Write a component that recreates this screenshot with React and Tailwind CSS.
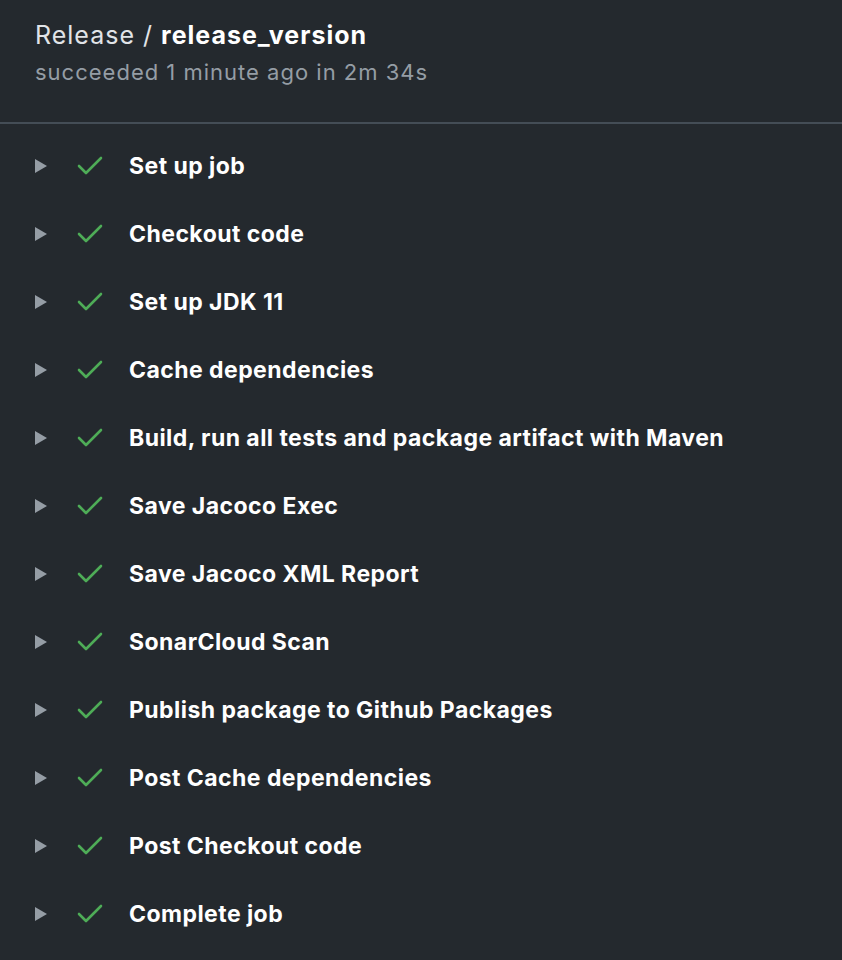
const steps = [
  'Set up job',
  'Checkout code',
  'Set up JDK 11',
  'Cache dependencies',
  'Build, run all tests and package artifact with Maven',
  'Save Jacoco Exec',
  'Save Jacoco XML Report',
  'SonarCloud Scan',
  'Publish package to Github Packages',
  'Post Cache dependencies',
  'Post Checkout code',
  'Complete job',
];

const StepRow = ({ name }) => (
  <div className="flex items-center h-[68px] pl-[35px]">
    <svg width="12" height="14" viewBox="0 0 12 14" className="shrink-0">
      <path d="M0 0 L12 7 L0 14 Z" fill="#959da5" />
    </svg>
    <svg width="26" height="20" viewBox="0 0 26 20" className="shrink-0 ml-[30px]">
      <path d="M2 10 L9 17 L24 2" fill="none" stroke="#4eac57" strokeWidth="2.6" strokeLinecap="round" strokeLinejoin="round" />
    </svg>
    <span className="ml-[26px] text-[23px] font-bold text-white tracking-[0.45px]">{name}</span>
  </div>
);

const App = () => {
  return (
    <div className="w-[842px] h-[960px] bg-[#24292e] overflow-hidden font-['Inter','Liberation_Sans',sans-serif]">
      <div className="pl-[35px] pt-[17px] h-[122px]">
        <div className="text-[25px] leading-[36px] tracking-[1px] text-[#e1e4e8]">
          Release / <span className="font-bold text-white">release_version</span>
        </div>
        <div className="text-[22px] leading-[38px] tracking-[1px] text-[#959da5]">succeeded 1 minute ago in 2m 34s</div>
      </div>
      <div className="h-[2px] bg-[#444d56]" />
      <div className="pt-[8px]">
        {steps.map((s) => (
          <StepRow key={s} name={s} />
        ))}
      </div>
    </div>
  );
};

export default App;
